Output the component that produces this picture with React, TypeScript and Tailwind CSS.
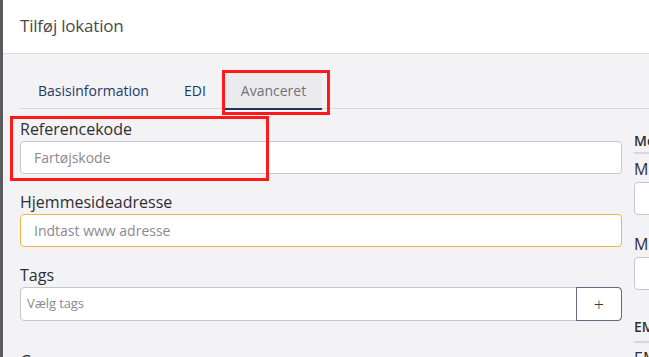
import React from "react";

const Field: React.FC<{ label: string; placeholder: string; highlight?: boolean }> = ({
  label,
  placeholder,
  highlight,
}) => (
  <div className="flex flex-col">
    <label className="text-[16px] leading-[24px] text-[#2e2e33]">{label}</label>
    <div
      className={`h-[33px] rounded-[4px] border bg-white flex items-center px-[13px] text-[14px] text-[#8a8a92] ${
        highlight ? "border-[#f6b24a]" : "border-[#c6c6cf]"
      }`}
    >
      {placeholder}
    </div>
  </div>
);

const App: React.FC = () => {
  return (
    <div
      className="relative w-[649px] h-[357px] overflow-hidden flex bg-[#f3f3f5]"
      style={{ fontFamily: '"Open Sans", "Noto Sans", sans-serif' }}
    >
      {/* page behind the modal */}
      <div className="w-[3px] shrink-0 bg-[#5b5b5f]" />

      <div className="flex-1 min-w-0 flex flex-col">
        {/* Header */}
        <div className="h-[54px] shrink-0 bg-white border-b border-[#dcdce0] flex items-center pl-[17px]">
          <h1 className="text-[17px] text-[#4a4a4f] tracking-[-0.2px] pb-[1px]">Tilføj lokation</h1>
        </div>

        {/* Body */}
        <div className="flex-1 pl-[17px] pt-[18px]">
          {/* Tabs */}
          <div className="flex border-b border-[#d6d6dc] h-[37px]">
            <div className="px-[18px] h-[36px] flex items-center text-[14px] font-medium text-[#1e3766]">
              Basisinformation
            </div>
            <div className="px-[17px] h-[36px] flex items-center text-[14px] font-medium text-[#1e3766]">
              EDI
            </div>
            <div className="px-[16px] h-[36px] ml-[2px] flex items-center text-[14px] text-[#71717c] bg-[#ebebee] border-b-2 border-[#1e3766] box-content">
              Avanceret
            </div>
          </div>

          {/* Form */}
          <div className="flex gap-[12px] pt-[8px]">
            <div className="w-[602px] shrink-0 flex flex-col gap-[16px]">
              <Field label="Referencekode" placeholder="Fartøjskode" />
              <Field label="Hjemmesideadresse" placeholder="Indtast www adresse" highlight />
              <div className="flex flex-col">
                <label className="text-[16px] leading-[24px] text-[#2e2e33]">Tags</label>
                <div className="h-[34px] flex rounded-[4px] border border-[#c6c6cf] bg-white">
                  <div className="flex-1 flex items-center pl-[6px] text-[13px] text-[#8a8a92] tracking-[-0.1px]">
                    Vælg tags
                  </div>
                  <div className="w-[46px] -m-[1px] rounded-r-[4px] border border-[#6e6280] flex items-center justify-center text-[18px] font-light text-[#3a3a44]">
                    +
                  </div>
                </div>
              </div>
              <label className="text-[16px] leading-[24px] text-[#2e2e33] mt-[12px]">Grupper</label>
            </div>

            <div className="w-[200px] shrink-0 flex flex-col pt-[14px]">
              <div className="text-[14px] leading-[20px] font-semibold text-[#2e2e33] border-b-2 border-[#d6d6dc] pb-[1px]">
                Medlemskab
              </div>
              <label className="text-[16px] leading-[24px] text-[#2e2e33] mt-[3px] mb-[1px]">Medlem</label>
              <div className="h-[33px] rounded-[4px] border border-[#c6c6cf] bg-white" />
              <label className="text-[16px] leading-[24px] text-[#2e2e33] mt-[17px] mb-[1px]">Medlemsnr.</label>
              <div className="h-[33px] rounded-[4px] border border-[#c6c6cf] bg-white" />
              <div className="mt-[27px] text-[14px] leading-[20px] font-semibold text-[#2e2e33] border-b-2 border-[#d6d6dc] pb-[4px]">
                EMAS
              </div>
              <label className="text-[16px] leading-[24px] text-[#2e2e33] mt-[3px]">EMAS nr.</label>
            </div>
          </div>
        </div>
      </div>

      {/* annotation boxes */}
      <div className="absolute left-[222px] top-[70px] w-[108px] h-[45px] border-[3px] border-[#ff1a1a]" />
      <div className="absolute left-[10px] top-[116px] w-[259px] h-[65px] border-[3px] border-[#ff1a1a]" />
    </div>
  );
};

export default App;
